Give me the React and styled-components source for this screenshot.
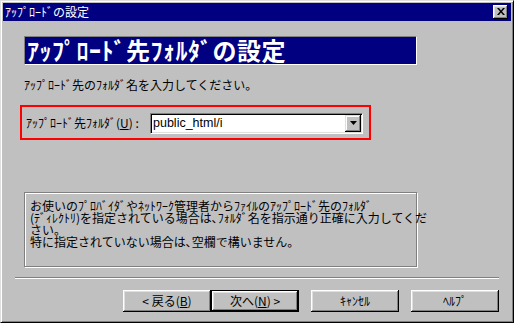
import React from "react";
import styled, { createGlobalStyle } from "styled-components";

const Global = createGlobalStyle`
  html, body { margin: 0; padding: 0; background: #c0c0c0; }
  body {
    font-family: "Noto Sans CJK JP", "Liberation Sans", sans-serif;
    font-size: 12px;
    color: #000;
  }
  * { box-sizing: border-box; }
`;

const Window = styled.div`
  width: 514px;
  height: 323px;
  background: #c0c0c0;
  border: 1px solid;
  border-color: #dfdfdf #000 #000 #dfdfdf;
  box-shadow: inset 1px 1px #fff, inset -1px -1px #808080;
  padding: 2px;
  display: flex;
  flex-direction: column;
`;

const TitleBar = styled.div`
  height: 18px;
  background: #000080;
  color: #fff;
  display: flex;
  align-items: center;
  padding: 0 3px 0 2px;
  flex-shrink: 0;
`;

const TitleText = styled.span`
  font-size: 12px;
  line-height: 12px;
  white-space: nowrap;
`;

const CloseButton = styled.div`
  margin-left: auto;
  width: 15px;
  height: 14px;
  background: #c0c0c0;
  box-shadow: inset -1px -1px #000, inset 1px 1px #fff, inset -2px -2px #808080,
    inset 2px 2px #dfdfdf;
  display: flex;
  align-items: center;
  justify-content: center;
  padding-bottom: 1px;
`;

const Body = styled.div`
  flex: 1;
  display: flex;
  flex-direction: column;
`;

const Heading = styled.div`
  margin: 15px 0 0 21px;
  width: 393px;
  height: 29px;
  background: #000080;
  border: 1px solid;
  border-color: #808080 #fff #fff #808080;
  color: #fff;
  font-size: 24px;
  font-weight: bold;
  line-height: 26px;
  letter-spacing: 0.5px;
  padding-left: 2px;
  white-space: nowrap;
`;

const Line = styled.div`
  margin: 14px 0 0 21px;
  line-height: 12px;
  white-space: nowrap;
`;

const Highlight = styled.div`
  margin: 14px 0 0 17px;
  width: 351px;
  height: 35px;
  border: 2px solid #ff0000;
  display: flex;
  align-items: center;
  justify-content: space-between;
  padding: 1px 6px 0 4px;
`;

const Label = styled.span`
  white-space: nowrap;
  line-height: 12px;
`;

const Combo = styled.div`
  width: 213px;
  height: 21px;
  background: #fff;
  border: 1px solid;
  border-color: #808080 #fff #fff #808080;
  box-shadow: inset 1px 1px #000, inset -1px -1px #dfdfdf;
  padding: 1px;
  display: flex;
  align-items: stretch;
`;

const ComboValue = styled.span`
  flex: 1;
  font-family: "Liberation Sans", sans-serif;
  font-size: 12.5px;
  line-height: 17px;
  padding-left: 1px;
  white-space: nowrap;
`;

const DropButton = styled.div`
  width: 16px;
  background: #c0c0c0;
  box-shadow: inset -1px -1px #000, inset 1px 1px #dfdfdf, inset -2px -2px #808080,
    inset 2px 2px #fff;
  display: flex;
  align-items: center;
  justify-content: center;
`;

const Group = styled.div`
  margin: 52px 0 0 21px;
  width: 393px;
  height: 75px;
  border: 1px solid #808080;
  box-shadow: inset 1px 1px #fff, 1px 1px #fff;
  padding: 7px 5px;
  line-height: 12px;
  white-space: nowrap;
`;

const Separator = styled.div`
  margin: 10px 12px 0 12px;
  height: 2px;
  border-top: 1px solid #808080;
  border-bottom: 1px solid #fff;
`;

const ButtonRow = styled.div`
  margin-top: 11px;
  display: flex;
  justify-content: flex-end;
  gap: 12px;
  padding-right: 12px;
`;

const ButtonPair = styled.div`
  display: flex;
`;

const Button = styled.div`
  width: 88px;
  height: 22px;
  background: #c0c0c0;
  display: flex;
  align-items: center;
  justify-content: center;
  font-size: 12px;
  line-height: 12px;
  white-space: nowrap;
  border: ${(p) => (p.$default ? "1px solid #000" : "none")};
  box-shadow: inset -1px -1px #000, inset 1px 1px #fff, inset -2px -2px #808080,
    inset 2px 2px #dfdfdf;
`;

export default function App() {
  return (
    <>
      <Global />
      <Window>
        <TitleBar>
          <TitleText>ｱｯﾌﾟﾛｰﾄﾞの設定</TitleText>
          <CloseButton>
            <svg width="8" height="7" viewBox="0 0 8 7">
              <path d="M0 0h2l2 2.5L6 0h2L5 3.5 8 7H6L4 4.5 2 7H0l3-3.5z" fill="#000" />
            </svg>
          </CloseButton>
        </TitleBar>
        <Body>
          <Heading>ｱｯﾌﾟﾛｰﾄﾞ先ﾌｫﾙﾀﾞの設定</Heading>
          <Line>ｱｯﾌﾟﾛｰﾄﾞ先のﾌｫﾙﾀﾞ名を入力してください。</Line>
          <Highlight>
            <Label>
              ｱｯﾌﾟﾛｰﾄﾞ先ﾌｫﾙﾀﾞ(<u>U</u>) :
            </Label>
            <Combo>
              <ComboValue>public_html/i</ComboValue>
              <DropButton>
                <svg width="7" height="4" viewBox="0 0 7 4">
                  <path d="M0 0h7L3.5 4z" fill="#000" />
                </svg>
              </DropButton>
            </Combo>
          </Highlight>
          <Group>
            お使いのﾌﾟﾛﾊﾞｲﾀﾞやﾈｯﾄﾜｰｸ管理者からﾌｧｲﾙのｱｯﾌﾟﾛｰﾄﾞ先のﾌｫﾙﾀﾞ
            <br />
            (ﾃﾞｨﾚｸﾄﾘ)を指定されている場合は､ﾌｫﾙﾀﾞ名を指示通り正確に入力してくだ
            <br />
            さい。
            <br />
            特に指定されていない場合は､空欄で構いません。
          </Group>
          <Separator />
          <ButtonRow>
            <ButtonPair>
              <Button>
                &lt; 戻る(<u>B</u>)
              </Button>
              <Button $default>
                次へ(<u>N</u>) &gt;
              </Button>
            </ButtonPair>
            <Button>ｷｬﾝｾﾙ</Button>
            <Button>ﾍﾙﾌﾟ</Button>
          </ButtonRow>
        </Body>
      </Window>
    </>
  );
}
